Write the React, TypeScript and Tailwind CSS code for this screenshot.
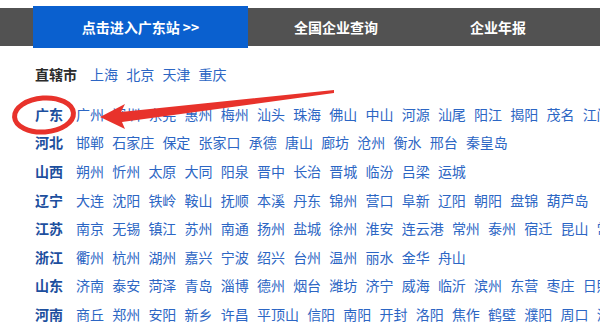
import React from 'react';

const rows: { label: string; cities: string[] }[] = [
    { label: '广东', cities: ['广州', '深圳', '东莞', '惠州', '梅州', '汕头', '珠海', '佛山', '中山', '河源', '汕尾', '阳江', '揭阳', '茂名', '江门'] },
    { label: '河北', cities: ['邯郸', '石家庄', '保定', '张家口', '承德', '唐山', '廊坊', '沧州', '衡水', '邢台', '秦皇岛'] },
    { label: '山西', cities: ['朔州', '忻州', '太原', '大同', '阳泉', '晋中', '长治', '晋城', '临汾', '吕梁', '运城'] },
    { label: '辽宁', cities: ['大连', '沈阳', '铁岭', '鞍山', '抚顺', '本溪', '丹东', '锦州', '营口', '阜新', '辽阳', '朝阳', '盘锦', '葫芦岛'] },
    { label: '江苏', cities: ['南京', '无锡', '镇江', '苏州', '南通', '扬州', '盐城', '徐州', '淮安', '连云港', '常州', '泰州', '宿迁', '昆山', '常熟'] },
    { label: '浙江', cities: ['衢州', '杭州', '湖州', '嘉兴', '宁波', '绍兴', '台州', '温州', '丽水', '金华', '舟山'] },
    { label: '山东', cities: ['济南', '泰安', '菏泽', '青岛', '淄博', '德州', '烟台', '潍坊', '济宁', '威海', '临沂', '滨州', '东营', '枣庄', '日照'] },
    { label: '河南', cities: ['商丘', '郑州', '安阳', '新乡', '许昌', '平顶山', '信阳', '南阳', '开封', '洛阳', '焦作', '鹤壁', '濮阳', '周口', '漯河'] },
];

const Row: React.FC<{ label: string; cities: string[]; dark?: boolean }> = ({ label, cities, dark }) => (
    <div className="flex items-center h-[28.6px] whitespace-nowrap">
        <span className={`font-bold mr-[13px] ${dark ? 'text-[#2b2b2b]' : 'text-[#1d4f9e]'}`}>{label}</span>
        <div className="flex gap-x-[8.2px]">
            {cities.map((c) => (
                <span key={c} className="text-[#2c66c4]">{c}</span>
            ))}
        </div>
    </div>
);

export default function App() {
    return (
        <div
            className="relative w-[600px] h-[322px] overflow-hidden bg-white text-[14px]"
            style={{ fontFamily: '"Noto Sans CJK SC", "Noto Sans", sans-serif' }}
        >
            <div className="pt-[8px]">
                <div className="flex items-center h-[38px] bg-[#525252] text-white font-bold">
                    <div className="ml-[33px] w-[215px] h-[42px] bg-[#0a60cf] flex items-center justify-center">
                        点击进入广东站 &gt;&gt;
                    </div>
                    <div className="w-[176px] text-center">全国企业查询</div>
                    <div className="w-[148px] text-center">企业年报</div>
                </div>
            </div>

            <div className="pl-[35px] pt-[14px]">
                <Row label="直辖市" cities={['上海', '北京', '天津', '重庆']} dark />
                <div className="mt-[11.4px]">
                    {rows.map((r) => (
                        <Row key={r.label} label={r.label} cities={r.cities} />
                    ))}
                </div>
            </div>

            {/* red annotation */}
            <svg className="absolute left-0 top-0 pointer-events-none" width="600" height="322">
                <ellipse cx="44" cy="115" rx="29.5" ry="17" fill="none" stroke="#e8322b" strokeWidth="5" transform="rotate(-4 44 115)" />
                <polygon points="100,117 125,104 121,112 334,90 334,93 122,122 125,129" fill="#e8322b" />
            </svg>
        </div>
    );
}
